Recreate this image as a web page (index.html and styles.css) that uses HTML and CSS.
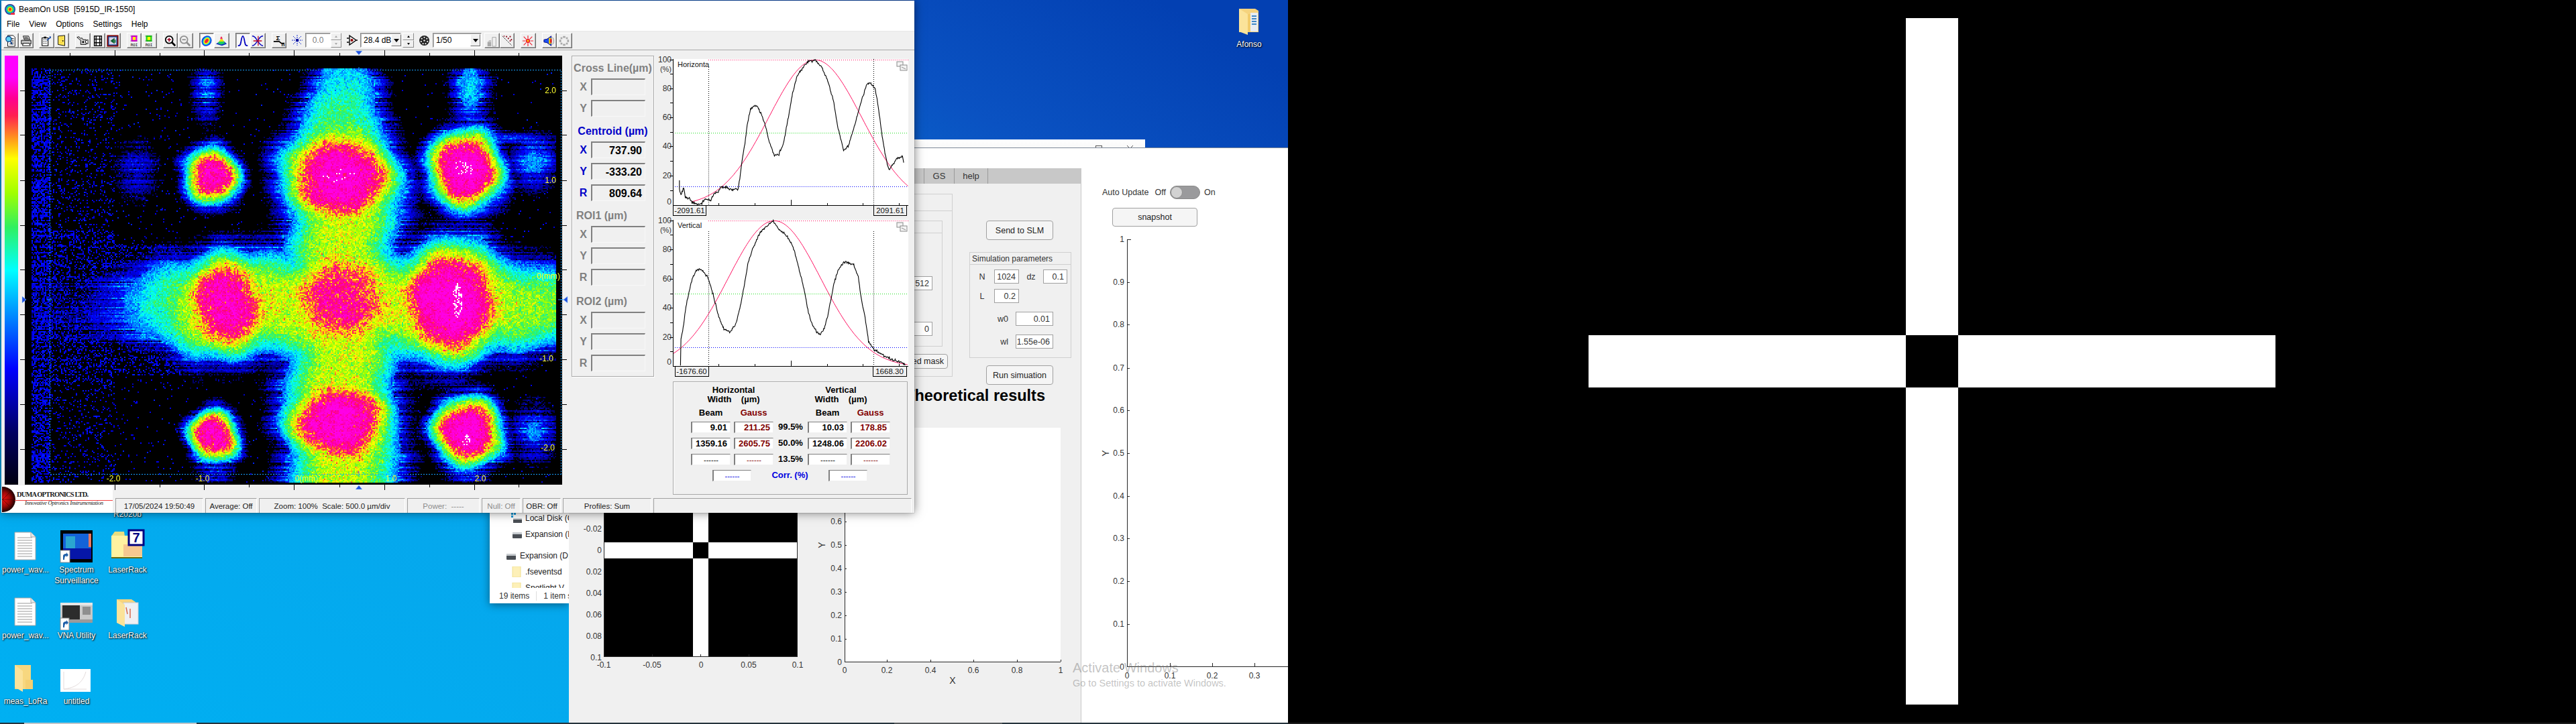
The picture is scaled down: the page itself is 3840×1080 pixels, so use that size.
FILE: index.html
```html
<!DOCTYPE html>
<html lang="en">
<head>
<meta charset="utf-8">
<title>BeamOn USB desktop</title>
<link rel="stylesheet" href="styles.css">
</head>
<body>
<div class="screen">
  <section class="monitor-left">
    <div class="desktop">

      <div class="desk-grid">
        <span></span><span></span>
        <div class="desk-cell"><span class="desk-label">R2020b</span></div>
        <div class="desk-cell">
          <svg class="desk-svg" viewBox="0 0 76 54"><path class="doc" d="M22 6h24l7 7v34H22z"/><path class="doc-fold" d="M46 6v7h7"/><path class="doc-lines" d="M26 14h22M26 18h22M26 22h22M26 26h22M26 30h22M26 34h22M26 38h22M26 42h22"/></svg>
          <span class="desk-label">power_wav...</span>
        </div>
        <div class="desk-cell">
          <svg class="desk-svg" viewBox="0 0 76 54"><rect x="14" y="3" width="48" height="48" fill="#000"/><rect x="18" y="8" width="42" height="28" fill="#1463d8"/><rect x="22" y="12" width="14" height="18" fill="#2aa6d0"/><rect x="56" y="8" width="4" height="20" fill="#e87860"/><rect x="18" y="30" width="42" height="16" fill="#0616a8"/><rect x="14" y="33" width="14" height="18" fill="#fff" stroke="#8a8a8a"/><path d="M18 47v-5c0-3 2-4 5-4v-2l3 4-3 3v-2c-2 0-3 2-3 6z" fill="#1f5fa8"/></svg>
          <span class="desk-label">Spectrum<br>Surveillance</span>
        </div>
        <div class="desk-cell">
          <svg class="desk-svg" viewBox="0 0 76 54"><path d="M14 12l5-7h14l1 7z" fill="#e8de80"/><rect x="14" y="11" width="46" height="32" fill="#fff2a0"/><rect x="32" y="24" width="28" height="18" fill="#f6c890"/><rect x="14" y="43" width="46" height="2" fill="#6b6b10"/><rect x="40" y="3" width="22" height="22" fill="#fff" stroke="#000080" stroke-width="3"/><text x="51" y="21" class="laser-seven">7</text></svg>
          <span class="desk-label">LaserRack</span>
        </div>
        <div class="desk-cell">
          <svg class="desk-svg" viewBox="0 0 76 54"><path class="doc" d="M22 6h24l7 7v34H22z"/><path class="doc-fold" d="M46 6v7h7"/><path class="doc-lines" d="M26 14h22M26 18h22M26 22h22M26 26h22M26 30h22M26 34h22M26 38h22M26 42h22"/></svg>
          <span class="desk-label">power_wav...</span>
        </div>
        <div class="desk-cell">
          <svg class="desk-svg" viewBox="0 0 76 54"><rect x="14" y="13" width="48" height="30" fill="#c9c9c9"/><rect x="14" y="13" width="48" height="4" fill="#e6e6e6"/><rect x="17" y="17" width="26" height="21" fill="#2c2c2c"/><rect x="47" y="19" width="12" height="12" fill="#8f8f8f"/><rect x="14" y="38" width="48" height="5" fill="#9a9a9a"/><rect x="14" y="36" width="13" height="18" fill="#fff" stroke="#8a8a8a"/><path d="M18 50v-5c0-3 2-4 5-4v-2l3 4-3 3v-2c-2 0-3 2-3 6z" fill="#1f5fa8"/></svg>
          <span class="desk-label">VNA Utility</span>
        </div>
        <div class="desk-cell">
          <svg class="desk-svg" viewBox="0 0 76 54"><path d="M22 8h22l6 4v28H22z" fill="#f5d37e"/><rect x="32" y="13" width="22" height="32" fill="#eef0f4" stroke="#c8ccd4"/><path d="M22 8l12 8v33l-12-6z" fill="#fbe39a"/><path d="M36 20l2 10M42 22v14" stroke="#d86a4c" stroke-width="1.5"/></svg>
          <span class="desk-label">LaserRack</span>
        </div>
        <div class="desk-cell">
          <svg class="desk-svg" viewBox="0 0 76 54"><path d="M22 8h24v36H22z" fill="#f7d77f"/><path d="M22 8l12 9v31l-12-7z" fill="#fbe29a"/><rect x="38" y="30" width="11" height="14" fill="#f4cf72"/></svg>
          <span class="desk-label">meas_LoRa</span>
        </div>
        <div class="desk-cell">
          <svg class="desk-svg" viewBox="0 0 76 54"><rect x="14" y="14" width="45" height="34" fill="#fff"/><path d="M19 44c16-2 28-8 33-26M19 18v26h34" fill="none" stroke="#e4dcdc" stroke-width="1"/></svg>
          <span class="desk-label">untitled</span>
        </div>
      </div>

      <figure class="desk-afonso">
        <svg class="afonso-svg" viewBox="0 0 34 44"><path d="M2 3h24l5 3v32H2z" fill="#f5d37e"/><rect x="19" y="9" width="11" height="28" fill="#e8ecf2"/><path d="M21 14h7M21 18h7M21 22h7M21 26h7" stroke="#3f88c5" stroke-width="2"/><path d="M2 3l13 8v31L2 37z" fill="#fbe39a"/><path d="M15 11h4v27h-4z" fill="#f2cc6c"/></svg>
        <figcaption class="desk-label">Afonso</figcaption>
      </figure>

      <div class="win-explorer">
        <div class="ex-tree">
          <div class="ex-row ex-sub"><svg class="ex-icon" viewBox="0 0 16 16"><rect x="0" y="0" width="3" height="3" fill="#1a9ad8"/><rect x="4" y="0" width="3" height="3" fill="#1a9ad8"/><rect x="0" y="4" width="3" height="3" fill="#1a9ad8"/><rect x="3" y="8" width="13" height="7" fill="#4a4f55"/><rect x="3" y="8" width="13" height="2" fill="#c8ccd0"/></svg>Local Disk (C:)</div>
          <div class="ex-row ex-sub"><svg class="ex-icon" viewBox="0 0 16 16"><rect x="2" y="5" width="14" height="9" rx="1" fill="#4a4f55"/><rect x="2" y="5" width="14" height="3" fill="#c8ccd0"/></svg>Expansion (D:)</div>
          <div class="ex-row ex-root"><svg class="ex-icon" viewBox="0 0 16 16"><rect x="1" y="5" width="14" height="9" rx="1" fill="#4a4f55"/><rect x="1" y="5" width="14" height="3" fill="#c8ccd0"/></svg>Expansion (D:)</div>
          <div class="ex-row ex-folder"><svg class="ex-icon-folder" viewBox="0 0 14 16"><path d="M1 0h12v16H1z" fill="#fdf0b8" stroke="#f0e090"/></svg>.fseventsd</div>
          <div class="ex-row ex-folder"><svg class="ex-icon-folder" viewBox="0 0 14 16"><path d="M1 0h12v16H1z" fill="#fdf0b8" stroke="#f0e090"/></svg>Spotlight V</div>
        </div>
        <div class="ex-status"><span>19 items</span><span class="ex-status-sep">1 item s</span></div>
      </div>

      <div class="win-behind">
        <svg class="behind-btns" viewBox="1620 208 87 12"><rect x="1633.5" y="217.5" width="9" height="9" class="behind-glyph"/><path d="M1680 217l9 9M1689 217l-9 9" class="behind-glyph"/></svg>
      </div>

      <div class="win-matlab">
        <div class="mat-panel">
          <div class="mat-tabs">
            <span class="mat-tab-spacer"></span>
            <span class="mat-tab mat-tab-gs">GS</span>
            <span class="mat-tab mat-tab-help">help</span>
          </div>
          <div class="mat-columns">
            <div class="mask-group">
              <div class="mask-group-title"></div>
              <div class="mask-inner">
                <div class="mask-inner-title"></div>
                <div class="mask-inner-body">
                  <span class="num-field num-wide">512</span>
                  <span class="num-field num-wide">0</span>
                </div>
              </div>
              <button class="mat-btn btn-mask">Load saved mask</button>
            </div>
            <div class="sim-col">
              <button class="mat-btn btn-sim">Send to SLM</button>
              <div class="sim-box">
                <div class="sim-title">Simulation parameters</div>
                <div class="sim-row sim-row-n"><span class="sim-lab">N</span><span class="num-field sim-f1">1024</span><span class="sim-lab">dz</span><span class="num-field sim-f2">0.1</span></div>
                <div class="sim-row sim-row-l"><span class="sim-lab">L</span><span class="num-field sim-f1">0.2</span></div>
                <div class="sim-row sim-row-w0"><span class="sim-lab-r">w0</span><span class="num-field sim-f3">0.01</span></div>
                <div class="sim-row sim-row-wl"><span class="sim-lab-r">wl</span><span class="num-field sim-f3">1.55e-06</span></div>
              </div>
              <button class="mat-btn btn-run">Run simuation</button>
            </div>
          </div>
          <h2 class="theory">Theoretical results</h2>
          <svg class="panel-plots" viewBox="848 605 763 473">
            <g class="mask-img">
              <rect x="900" y="662" width="288" height="318" fill="#000"/>
              <rect x="1033" y="662" width="23" height="318" fill="#fff"/>
              <rect x="900" y="810" width="288" height="24" fill="#fff"/>
              <rect x="1033" y="810" width="23" height="24" fill="#000"/>
            </g>
            <path class="axis" d="M900 662v318h288v-318M972 980v-3M1044 980v-3M1116 980v-3"/>
            <g class="tick tick-end">
              <text x="897" y="794">-0.02</text><text x="897" y="826">0</text><text x="897" y="858">0.02</text><text x="897" y="890">0.04</text><text x="897" y="922">0.06</text><text x="897" y="954">0.08</text><text x="897" y="986">0.1</text>
            </g>
            <g class="tick tick-mid">
              <text x="900" y="997">-0.1</text><text x="972" y="997">-0.05</text><text x="1045" y="997">0</text><text x="1116" y="997">0.05</text><text x="1189" y="997">0.1</text>
            </g>
            <rect x="1259" y="639" width="322" height="349" fill="#fff"/>
            <path class="axis" d="M1259 639v349h322M1259 779h3M1259 814h3M1259 849h3M1259 884h3M1259 919h3M1259 954h3M1322 988v-3M1387 988v-3M1451 988v-3M1516 988v-3M1581 988v-3"/>
            <g class="tick tick-end">
              <text x="1255" y="783">0.6</text><text x="1255" y="818">0.5</text><text x="1255" y="853">0.4</text><text x="1255" y="888">0.3</text><text x="1255" y="923">0.2</text><text x="1255" y="958">0.1</text><text x="1255" y="993">0</text>
            </g>
            <g class="tick tick-mid">
              <text x="1259" y="1005">0</text><text x="1322" y="1005">0.2</text><text x="1387" y="1005">0.4</text><text x="1451" y="1005">0.6</text><text x="1516" y="1005">0.8</text><text x="1581" y="1005">1</text>
            </g>
            <text class="tick-title" x="1420" y="1021">X</text>
            <text class="tick-title" transform="translate(1230 814) rotate(-90)">Y</text>
          </svg>
        </div>
        <div class="mat-right">
          <div class="auto-row">
            <span class="auto-lab">Auto Update</span><span class="auto-off">Off</span>
            <span class="toggle"><span class="toggle-knob"></span></span>
            <span class="auto-on">On</span>
          </div>
          <button class="mat-btn btn-snap">snapshot</button>
          <svg class="right-plot" viewBox="1612 345 308 733">
            <path class="axis" d="M1686 357h-6v637h240M1680 421h4M1680 484h4M1680 549h4M1680 612h4M1680 676h4M1680 740h4M1680 803h4M1680 867h4M1680 931h4M1744 994v-5M1807 994v-5M1870 994v-5"/>
            <g class="tick tick-end">
              <text x="1676" y="361">1</text><text x="1676" y="425">0.9</text><text x="1676" y="488">0.8</text><text x="1676" y="553">0.7</text><text x="1676" y="616">0.6</text><text x="1676" y="680">0.5</text><text x="1676" y="744">0.4</text><text x="1676" y="807">0.3</text><text x="1676" y="871">0.2</text><text x="1676" y="935">0.1</text><text x="1676" y="999">0</text>
            </g>
            <g class="tick tick-mid">
              <text x="1680" y="1012">0</text><text x="1744" y="1012">0.1</text><text x="1807" y="1012">0.2</text><text x="1870" y="1012">0.3</text>
            </g>
            <text class="tick-title" transform="translate(1653 676) rotate(-90)">Y</text>
          </svg>
        </div>
      </div>

      <div class="win-beamon">
        <header class="bo-title">
          <svg class="bo-title-icon" viewBox="0 0 16 16"><circle cx="8" cy="8" r="8" fill="#3a3a8c"/><circle cx="8" cy="8" r="6.5" fill="#00b4e0"/><circle cx="8" cy="8" r="5" fill="#30d060"/><circle cx="8" cy="8" r="3.6" fill="#f0f000"/><circle cx="8" cy="8" r="2.2" fill="#ff3020"/><path d="M9 13h6v3H9z" fill="#e83048"/></svg>
          <span>BeamOn USB&nbsp; [5915D_IR-1550]</span>
        </header>
        <nav class="bo-menu"><span>File</span><span>View</span><span>Options</span><span>Settings</span><span>Help</span></nav>
        <div class="bo-toolbar">
          <div class="tb-group tb-group-8">
            <span class="tb-btn"><svg viewBox="0 0 20 20"><path d="M5 1h9l3 3v15H5z" fill="#fff" stroke="#000"/><path d="M9 6h6M11 9h4M11 12h4M8 15h7" stroke="#000"/><circle cx="6.5" cy="7" r="4.5" fill="#5ad0f0" stroke="#0a3c88" stroke-width="1.4"/><path d="M9.5 11l3 5" stroke="#0a3c88" stroke-width="2"/></svg></span>
            <span class="tb-btn"><svg viewBox="0 0 20 20"><path d="M5 2h9l2 6H7z" fill="#fff" stroke="#000"/><path d="M2 9h16v6H2z" fill="#c0c0c0" stroke="#000"/><path d="M5 14h10l2 4H4z" fill="#fff" stroke="#000"/><path d="M7 4h6M7 6h7" stroke="#000"/></svg></span>
          </div>
          <div class="tb-group">
            <span class="tb-btn"><svg viewBox="0 0 20 20"><path d="M3 5h10v13H3z" fill="#fff" stroke="#000" stroke-width="1.2"/><path d="M5 8h6M5 11h6M5 14h6" stroke="#000" stroke-dasharray="1.5 1"/><path d="M6 3h4v3H6z" fill="#000"/><path d="M11 9l6-5" stroke="#1c4ea8" stroke-width="2"/><path d="M15 2l3 1-1 3z" fill="#1c4ea8"/></svg></span>
            <span class="tb-btn"><svg viewBox="0 0 20 20"><path d="M4 2l11-1v17L4 16z" fill="#ffe65c" stroke="#000"/><path d="M7 4l6-1M7 7l6-1M7 10l6-1M7 13l6 0" stroke="#e0b000" stroke-dasharray="1 1"/><circle cx="12" cy="10" r="1" fill="#000"/></svg></span>
          </div>
          <div class="tb-group">
            <span class="tb-btn"><svg viewBox="0 0 20 20"><path d="M1 4l3-1 3 3 2-1 2 3h5v8H7V9L4 7z" fill="#ccc" stroke="#000"/><path d="M15 10l4-2v7l-4-2z" fill="#fff" stroke="#000"/><circle cx="11" cy="12" r="1.6" fill="#000"/></svg></span>
            <span class="tb-btn"><svg viewBox="0 0 20 20"><rect x="4" y="2" width="12" height="16" fill="#fff" stroke="#000" stroke-width="1.5"/><path d="M4 7h12M4 13h12M7 2v16M13 2v16" stroke="#000" stroke-width="1.5"/></svg></span>
            <span class="tb-btn"><svg viewBox="0 0 20 20"><rect x="1.5" y="1.5" width="17" height="17" fill="#1a50a0" stroke="#800000" stroke-width="2"/><rect x="4" y="4" width="12" height="12" fill="#d8d0e8"/><path d="M6 10l7-5v10z" fill="#106030"/><path d="M11 8h4v5h-4z" fill="#2a8050"/></svg></span>
          </div>
          <div class="tb-group">
            <span class="tb-btn"><svg viewBox="0 0 20 20"><rect x="5" y="1" width="10" height="10" fill="#e000e0"/><rect x="7.5" y="3.5" width="5" height="5" fill="#ff0"/><path d="M4 2h12M4 10h12" stroke="#600060" stroke-dasharray="1 1"/><text x="10" y="18.5" class="roi-text">ROI</text></svg></span>
            <span class="tb-btn"><svg viewBox="0 0 20 20"><rect x="5" y="1" width="10" height="10" fill="#20d020"/><rect x="7.5" y="3.5" width="5" height="5" fill="#ff0"/><path d="M4 2h12M4 10h12" stroke="#006000" stroke-dasharray="1 1"/><text x="10" y="18.5" class="roi-text">ROI</text></svg></span>
          </div>
          <div class="tb-group">
            <span class="tb-btn"><svg viewBox="0 0 20 20"><circle cx="8" cy="8" r="6" fill="#fff" stroke="#000" stroke-width="2"/><path d="M5 8h6M8 5v6" stroke="#a01030" stroke-width="2"/><path d="M12 12l6 6" stroke="#000" stroke-width="3"/></svg></span>
            <span class="tb-btn"><svg viewBox="0 0 20 20"><circle cx="8" cy="8" r="6" fill="#f0f0f0" stroke="#909090" stroke-width="2"/><path d="M5 8h6" stroke="#909090" stroke-width="2"/><path d="M12 12l6 6" stroke="#909090" stroke-width="3"/></svg></span>
          </div>
          <div class="tb-group">
            <span class="tb-btn tb-on"><svg viewBox="0 0 20 20"><ellipse cx="10" cy="10" rx="8" ry="9" transform="rotate(35 10 10)" fill="#1040e0"/><ellipse cx="10" cy="10" rx="6" ry="7.5" transform="rotate(35 10 10)" fill="#10d0e0"/><ellipse cx="10" cy="10" rx="4.5" ry="6" transform="rotate(35 10 10)" fill="#f0f000"/><ellipse cx="10" cy="10" rx="2.6" ry="4" transform="rotate(35 10 10)" fill="#f02040"/></svg></span>
            <span class="tb-btn"><svg viewBox="0 0 20 20"><path d="M1 15l6-4h8l4 4-8 3z" fill="#1030c0"/><path d="M4 14l4-5h5l3 5-6 2z" fill="#20d060"/><path d="M6 11l3-4h3l2 4z" fill="#f0e000"/><path d="M8 7h4l-1-4H9z" fill="#f03060"/></svg></span>
          </div>
          <div class="tb-group">
            <span class="tb-btn tb-on"><svg viewBox="0 0 20 20"><path d="M2 18c4 0 4-2 5-7 1-6 2-9 3-9s2 3 3 9c1 5 1 7 5 7" fill="none" stroke="#0000c0" stroke-width="2"/></svg></span>
            <span class="tb-btn"><svg viewBox="0 0 20 20"><path d="M1 2c5 0 6 4 9 8 3-4 4-8 9-8M1 18c4 0 6-4 9-8 3 4 5 8 9 8" fill="none" stroke="#0000c0" stroke-width="1.6"/><path d="M3 10h14M11 2v16" stroke="#c00020" stroke-width="1.4"/></svg></span>
          </div>
          <div class="tb-group tb-group-8">
            <span class="tb-btn"><svg viewBox="0 0 20 20"><text x="5" y="9" class="sig-text">Σ</text><path d="M1 11h9l4 3h5" stroke="#000" stroke-width="2" fill="none"/><text x="14" y="19" class="sig-n">n</text></svg></span>
          </div>
          <svg class="tb-icon tb-star" viewBox="0 0 16 18"><path d="M8 1v16M0 9h16M2 3l12 12M14 3L2 15" stroke="#1830d0" stroke-dasharray="2 1"/><circle cx="8" cy="9" r="2" fill="#000090"/></svg>
          <div class="tb-field">0.0</div>
          <div class="tb-spin tb-spin-dis"><span class="spin-up"></span><span class="spin-down"></span></div>
          <svg class="tb-icon tb-amp" viewBox="0 0 16 18"><path d="M0 6h3M0 12h3M13 9h3M4 2v14l10-7z" fill="none" stroke="#000" stroke-width="1.4"/><circle cx="7.5" cy="9" r="2" fill="#900000"/></svg>
          <div class="tb-combo tb-combo-db"><span class="combo-text">28.4 dB</span><span class="combo-arrow"></span></div>
          <div class="tb-spin tb-spin-on"><span class="spin-up"></span><span class="spin-down"></span></div>
          <svg class="tb-icon tb-wheel" viewBox="0 0 16 16"><circle cx="8" cy="8" r="8" fill="#222"/><g fill="#e8e8e8"><circle cx="8" cy="3" r="1.2"/><circle cx="12" cy="5" r="1.2"/><circle cx="13" cy="9.5" r="1.2"/><circle cx="10" cy="13" r="1.2"/><circle cx="6" cy="13" r="1.2"/><circle cx="3" cy="9.5" r="1.2"/><circle cx="4" cy="5" r="1.2"/><circle cx="8" cy="8" r="1.4"/></g></svg>
          <div class="tb-combo tb-combo-nd"><span class="combo-text">1/50</span><span class="combo-arrow"></span></div>
          <div class="tb-group tb-group-4">
            <span class="tb-btn"><svg viewBox="0 0 20 20"><path d="M3 12h6v7H3z" fill="#a8a8a8"/><path d="M11 4h6v15h-6z" fill="#f0f0f0" stroke="#a0a0a0"/><path d="M3 12l3-3h3v3z" fill="#c0c0c0"/></svg></span>
            <span class="tb-btn"><svg viewBox="0 0 20 20"><path d="M2 2l16 16" stroke="#000" stroke-dasharray="1.5 1"/><g fill="#901020"><circle cx="9" cy="3" r="1.2"/><circle cx="15" cy="3" r="1.2"/><circle cx="12" cy="6" r="1.2"/><circle cx="17" cy="8" r="1.2"/><circle cx="15" cy="10" r="1.2"/><circle cx="5" cy="2" r="1"/></g></svg></span>
          </div>
          <div class="tb-group">
            <span class="tb-btn"><svg viewBox="0 0 20 20"><path d="M10 1v5M10 14v5M1 10h5M14 10h5M3 3l4 4M17 3l-4 4M3 17l4-4M17 17l-4-4" stroke="#f02030" stroke-width="1.3"/><circle cx="10" cy="10" r="3.5" fill="#f02030"/><circle cx="10" cy="10" r="1.6" fill="#ffd000"/></svg></span>
          </div>
          <div class="tb-group">
            <span class="tb-btn"><svg viewBox="0 0 20 20"><path d="M1 8l5-1 7-5v16l-7-5-5-1z" fill="#1c50f0" stroke="#000080"/><path d="M9 5h4v10H9z" fill="#f0d000"/><path d="M11 7h3v6h-3z" fill="#e02020"/><path d="M15 4c3 3 3 9 0 12" fill="none" stroke="#808080"/></svg></span>
            <span class="tb-btn"><svg viewBox="0 0 20 20"><g fill="#a8a8a8"><rect x="8" y="2" width="4" height="3"/><rect x="8" y="15" width="4" height="3"/><rect x="2" y="8" width="3" height="4"/><rect x="15" y="8" width="3" height="4"/><rect x="4" y="4" width="3" height="3"/><rect x="13" y="4" width="3" height="3"/><rect x="4" y="13" width="3" height="3"/><rect x="13" y="13" width="3" height="3"/></g></svg></span>
          </div>
        </div>

        <div class="bo-body">
          <div class="scope">
            <div class="colorbar"></div>
            <canvas id="heat" class="heat" width="801" height="640"></canvas>
            <svg class="scope-overlay" viewBox="2 75 850 667">
              <path class="tick-line" d="M171 75v8M304 75v8M438 75v8M573 75v8M707 75v8M104 79v4M238 79v4M371 79v4M506 79v4M640 79v4M773 79v4"/>
              <path class="tick-line" d="M171 723v8M304 723v8M438 723v8M573 723v8M707 723v8M238 723v4M371 723v4M506 723v4M640 723v4M773 723v4"/>
              <path class="tick-line" d="M30 135h7M30 201h7M30 269h7M30 336h7M30 402h7M30 469h7M30 536h7M30 603h7M30 670h7M838 135h7M838 201h7M838 269h7M838 336h7M838 402h7M838 469h7M838 536h7M838 603h7M838 670h7"/>
              <rect class="dash-box" x="74" y="104" width="762" height="603"/>
              <path class="dash-mark" d="M70 447h8M832 447h8M535 100v8M535 703v8"/>
              <path class="marker" d="M530 76h10l-5 6zM530 730h10l-5-6zM33 442v10l6-5zM846 442v10l-6-5z"/>
              <g class="scope-label">
                <text x="829" y="139">2.0</text><text x="829" y="273">1.0</text><text x="835" y="416">0(mm)</text><text x="825" y="539">-1.0</text><text x="827" y="672">-2.0</text>
              </g>
              <g class="scope-label scope-label-mid">
                <text x="169" y="718">-2.0</text><text x="302" y="718">-1.0</text><text x="457" y="718">0(mm)</text><text x="583" y="718">1.0</text><text x="716" y="718">2.0</text>
              </g>
            </svg>
          </div>

          <aside class="readouts">
            <div class="rd-section">
              <h3 class="rd-head rd-gray">Cross Line(µm)</h3>
              <div class="rd-row rd-gray"><span class="rd-key">X</span><span class="rd-val"></span></div>
              <div class="rd-row rd-gray"><span class="rd-key">Y</span><span class="rd-val"></span></div>
            </div>
            <div class="rd-section">
              <h3 class="rd-head rd-blue">Centroid (µm)</h3>
              <div class="rd-row rd-blue"><span class="rd-key">X</span><span class="rd-val">737.90</span></div>
              <div class="rd-row rd-blue"><span class="rd-key">Y</span><span class="rd-val">-333.20</span></div>
              <div class="rd-row rd-blue"><span class="rd-key">R</span><span class="rd-val">809.64</span></div>
            </div>
            <div class="rd-section">
              <h3 class="rd-head rd-gray rd-indent">ROI1 (µm)</h3>
              <div class="rd-row rd-gray"><span class="rd-key">X</span><span class="rd-val"></span></div>
              <div class="rd-row rd-gray"><span class="rd-key">Y</span><span class="rd-val"></span></div>
              <div class="rd-row rd-gray"><span class="rd-key">R</span><span class="rd-val"></span></div>
            </div>
            <div class="rd-section rd-last">
              <h3 class="rd-head rd-gray rd-indent">ROI2 (µm)</h3>
              <div class="rd-row rd-gray"><span class="rd-key">X</span><span class="rd-val"></span></div>
              <div class="rd-row rd-gray"><span class="rd-key">Y</span><span class="rd-val"></span></div>
              <div class="rd-row rd-gray"><span class="rd-key">R</span><span class="rd-val"></span></div>
            </div>
          </aside>

          <div class="profiles">
            <svg class="prof-svg" viewBox="975 83 385 484">
              <rect x="1003" y="88" width="351" height="218" fill="#fff"/>
              <rect x="1003" y="328" width="351" height="218" fill="#fff"/>
              <path class="dot-red" d="M1056 89.5h298M1056 329.5h298"/>
              <path class="dot-green" d="M1003 198.5h351M1003 438.5h351"/>
              <path class="dot-blue" d="M1003 278.5h351M1003 518.5h351"/>
              <path class="dot-black" d="M1056 100v206M1302 88v218M1056 345v201M1302 345v201"/>
              <g id="curves"></g>
              <path class="axis-strong" d="M1003 88v218h351M998 89h5M999 110h4M998 132h5M999 153h4M998 175h5M999 197h4M998 218h5M999 240h4M998 262h5M999 284h4M1071 306v-3M1125 306v-3M1179 306v-8M1233 306v-3M1286 306v-3M1340 306v-3"/>
              <path class="axis-strong" d="M1003 328v218h351M998 329h5M999 350h4M998 372h5M999 394h4M998 416h5M999 438h4M998 459h5M999 481h4M998 503h5M999 524h4M1071 546v-3M1125 546v-3M1179 546v-8M1233 546v-3M1286 546v-3M1340 546v-3"/>
              <g class="prof-tick">
                <text x="1001" y="93">100</text><text x="1001" y="107" class="prof-unit">(%)</text><text x="1001" y="136">80</text><text x="1001" y="179">60</text><text x="1001" y="222">40</text><text x="1001" y="266">20</text><text x="1001" y="305">0</text>
                <text x="1001" y="333">100</text><text x="1001" y="347" class="prof-unit">(%)</text><text x="1001" y="376">80</text><text x="1001" y="420">60</text><text x="1001" y="463">40</text><text x="1001" y="507">20</text><text x="1001" y="544">0</text>
              </g>
              <text class="prof-name" x="1010" y="100">Horizonta</text>
              <text class="prof-name" x="1010" y="340">Vertical</text>
              <g class="mini-win"><rect x="1337" y="92" width="9" height="7"/><rect x="1342" y="97" width="10" height="8"/><path d="M1344 100l6 3"/><rect x="1337" y="332" width="9" height="7"/><rect x="1342" y="337" width="10" height="8"/><path d="M1344 340l6 3"/></g>
              <g class="edge-tag">
                <rect x="1003.5" y="306.5" width="49" height="15"/><text x="1028" y="318">-2091.61</text>
                <rect x="1302.5" y="306.5" width="49" height="15"/><text x="1327" y="318">2091.61</text>
                <rect x="1006.5" y="546.5" width="50" height="15"/><text x="1031" y="558">-1676.60</text>
                <rect x="1301.5" y="546.5" width="50" height="15"/><text x="1326" y="558">1668.30</text>
              </g>
            </svg>
            <div class="width-table">
              <div class="wt-head">Horizontal<br><span class="wt-pre">Width    (µm)</span></div>
              <span></span>
              <div class="wt-head wt-head-v">Vertical<br><span class="wt-pre">Width    (µm)</span></div>

              <div class="wt-col">Beam</div><div class="wt-col wt-gauss">Gauss</div><span></span><div class="wt-col">Beam</div><div class="wt-col wt-gauss">Gauss</div>

              <span class="wt-val">9.01</span><span class="wt-val wt-gauss">211.25</span><span class="wt-pct">99.5%</span><span class="wt-val">10.03</span><span class="wt-val wt-gauss">178.85</span>
              <span class="wt-val">1359.16</span><span class="wt-val wt-gauss">2605.75</span><span class="wt-pct">50.0%</span><span class="wt-val">1248.06</span><span class="wt-val wt-gauss">2206.02</span>
              <span class="wt-val wt-dash">------</span><span class="wt-val wt-dash wt-gauss">------</span><span class="wt-pct">13.5%</span><span class="wt-val wt-dash">------</span><span class="wt-val wt-dash wt-gauss">------</span>

              <div class="wt-corr"><span class="wt-val wt-dash wt-corr-val">------</span><span class="wt-corr-lab">Corr. (%)</span><span class="wt-val wt-dash wt-corr-val">------</span></div>
            </div>
          </div>
        </div>

        <footer class="bo-status">
          <span class="st st-time">17/05/2024 19:50:49</span>
          <span class="st st-avg">Average: Off</span>
          <span class="st st-zoom">Zoom: 100%&nbsp; Scale: 500.0 µm/div</span>
          <span class="st st-pow st-dim">Power:&nbsp; -----</span>
          <span class="st st-null st-dim">Null: Off</span>
          <span class="st st-obr">OBR: Off</span>
          <span class="st st-prof">Profiles: Sum</span>
          <span class="st st-rest"></span>
        </footer>

        <svg class="bo-logo" viewBox="3 723 165 41">
          <defs><radialGradient id="sun"><stop offset="0" stop-color="#ff1010"/><stop offset=".55" stop-color="#a00808"/><stop offset="1" stop-color="#1a0000"/></radialGradient></defs>
          <rect x="3" y="723" width="165" height="41" fill="#fff"/>
          <circle cx="4" cy="744" r="19" fill="url(#sun)"/>
          <path d="M4 725v38M-15 744h38M-9 731l26 26M17 731l-26 26" stroke="#400000" stroke-width=".6"/>
          <path d="M22 745.5h146" stroke="#f04040"/>
          <text class="logo-main" x="25" y="740" textLength="107">DUMA OPTRONICS LTD.</text>
          <text class="logo-sub" x="37" y="752" textLength="117">Innovative Optronics Instrumentation</text>
        </svg>
      </div>

      <div class="watermark">
        <div class="wm-big">Activate Windows</div>
        <div class="wm-small">Go to Settings to activate Windows.</div>
      </div>
    </div>
    <div class="taskbar"><span class="tk-a"></span><span class="tk-b"></span><span class="tk-c"></span><span class="tk-d"></span></div>
  </section>

  <section class="monitor-right">
    <div class="right-stage">
      <div class="cross">
        <span></span><span class="cross-w"></span><span></span>
        <span class="cross-w"></span><span></span><span class="cross-w"></span>
        <span></span><span class="cross-w"></span><span></span>
      </div>
    </div>
    <div class="taskbar-r"></div>
  </section>
</div>
<script src="script.js"></script>
</body>
</html>
```

FILE: styles.css
```css
* { box-sizing: border-box; }
html, body { margin: 0; padding: 0; background: #000; overflow: hidden; }
body { font-family: "Liberation Sans", Arial, sans-serif; font-size: 12px; color: #000; }
h2, h3, figure { margin: 0; }
text { font-family: "Liberation Sans", Arial, sans-serif; }

.screen { display: flex; width: 3840px; height: 1080px; }
.monitor-left { width: 1920px; height: 1080px; display: flex; flex-direction: column; }
.monitor-right { width: 1920px; height: 1080px; display: flex; flex-direction: column; background: #000; }

/* desktop */
.desktop {
  position: relative; flex: 1; overflow: hidden;
  background: linear-gradient(to top right, #00b0f2 0%, #06a6ec 36%, #0a52c2 80%, #0340b2 95%);
}
.taskbar { height: 2px; display: flex; background: #26343d; }
.tk-a { width: 36px; }
.tk-b { width: 257px; background: #c0c6ca; }
.tk-c { width: 1040px; }
.tk-d { width: 161px; background: #55585a; }
.taskbar-r { height: 2px; background: #1c1c1c; }

.desk-grid {
  position: absolute; left: 0; top: 759px;
  display: grid; grid-template-columns: repeat(3, 76px); grid-template-rows: 29px 98px 98px 98px;
}
.desk-cell { display: flex; flex-direction: column; align-items: center; }
.desk-svg { width: 76px; height: 54px; display: block; }
.desk-label {
  color: #fff; font-size: 12px; line-height: 16px; text-align: center; white-space: nowrap;
  text-shadow: 1px 1px 2px #000, 0 0 2px rgba(0,0,0,.7);
}
.doc { fill: #fff; stroke: #a8a8a8; }
.doc-fold { fill: #e8e8e8; stroke: #a8a8a8; }
.doc-lines { stroke: #9a9a9a; fill: none; }
.laser-seven { font-size: 20px; font-weight: bold; fill: #000080; text-anchor: middle; }

.desk-afonso { position: absolute; left: 1830px; top: 10px; width: 64px; display: flex; flex-direction: column; align-items: center; }
.afonso-svg { width: 34px; height: 44px; display: block; margin-bottom: 4px; }

/* explorer */
.win-explorer {
  position: absolute; left: 730px; top: 760px; width: 118px; height: 140px; background: #fff; overflow: hidden;
  box-shadow: 0 2px 12px rgba(0,0,0,.45);
}
.ex-tree { height: 117px; padding-top: 1px; overflow: hidden; color: #1a1a1a; }
.ex-row { height: 24px; display: flex; align-items: center; white-space: nowrap; }
.ex-sub { padding-left: 32px; }
.ex-root { padding-left: 24px; margin-top: 8px; }
.ex-folder { padding-left: 33px; }
.ex-icon { width: 16px; height: 16px; margin-right: 5px; flex: none; }
.ex-icon-folder { width: 14px; height: 16px; margin-right: 6px; flex: none; }
.ex-status { height: 23px; display: flex; align-items: center; padding-left: 14px; color: #333; white-space: nowrap; }
.ex-status-sep { margin-left: 10px; padding-left: 10px; border-left: 1px solid #ddd; }

/* window behind */
.win-behind {
  position: absolute; left: 1300px; top: 208px; width: 407px; height: 20px;
  display: flex; justify-content: flex-end;
  background: linear-gradient(#fff, #f4f4f4);
}
.behind-btns { width: 87px; height: 12px; display: block; }
.behind-glyph { fill: none; stroke: #555; }

/* matlab */
.win-matlab {
  position: absolute; left: 848px; top: 220px; width: 1072px; height: 858px;
  display: flex; background: #fff; border-top: 1px solid #7f8a99;
}
.mat-panel {
  width: 764px; margin-top: 30px; background: #f0f0f0; border-right: 1px solid #c8c8c8;
  display: flex; flex-direction: column;
}
.mat-tabs { height: 23px; display: flex; background: #c8c8c8; color: #333; flex: none; }
.mat-tab-spacer { width: 529px; }
.mat-tab { display: flex; align-items: center; justify-content: center; border-left: 1px solid #9a9a9a; font-size: 13px; }
.mat-tab-gs { width: 45px; }
.mat-tab-help { width: 51px; border-right: 1px solid #9a9a9a; }

.mat-columns { display: flex; padding-top: 15px; flex: none; }
.mask-group {
  width: 550px; height: 273px; margin-left: 22px; border: 1px solid #d0d0d0;
  display: flex; flex-direction: column; align-items: flex-end;
}
.mask-group-title { align-self: stretch; height: 25px; border-bottom: 1px solid #d0d0d0; }
.mask-inner { width: 520px; height: 188px; margin: 14px 14px 0 0; border: 1px solid #d0d0d0; display: flex; flex-direction: column; }
.mask-inner-title { height: 18px; border-bottom: 1px solid #d0d0d0; }
.mask-inner-body { display: flex; flex-direction: column; align-items: flex-end; padding: 64px 14px 0 0; gap: 47px; }
.num-field {
  display: flex; align-items: center; justify-content: flex-end;
  height: 21px; padding-right: 4px; background: #fff; border: 1px solid #a0a0a0; color: #333; font-size: 12.5px;
}
.num-wide { width: 60px; }
.mat-btn {
  display: block; padding: 0; background: #f5f5f5; border: 1px solid #a0a0a0; border-radius: 4px;
  font: 12.5px "Liberation Sans", Arial, sans-serif; color: #222;
}
.btn-mask { width: 110px; height: 22px; margin: 11px 6px 0 0; }

.sim-col { width: 152px; margin-left: 25px; padding-top: 40px; display: flex; flex-direction: column; }
.btn-sim, .btn-run { width: 100px; height: 29px; margin-left: 25px; }
.sim-box { width: 152px; height: 158px; margin-top: 18px; border: 1px solid #cfcfcf; }
.sim-title { height: 18px; border-bottom: 1px solid #cfcfcf; padding: 2px 3px; color: #333; white-space: nowrap; }
.btn-run { margin-top: 11px; }
.sim-row { display: flex; align-items: center; }
.sim-row-n { margin-top: 7px; }
.sim-row-l { margin-top: 8px; }
.sim-row-w0 { margin-top: 13px; }
.sim-row-wl { margin-top: 13px; }
.sim-lab { width: 36px; text-align: center; color: #333; font-size: 12.5px; }
.sim-lab-r { width: 57px; text-align: right; margin-right: 11px; color: #333; font-size: 12.5px; }
.sim-f1 { width: 37px; }
.sim-f2 { width: 36px; }
.sim-f3 { width: 56px; }

.theory { font-size: 23.5px; line-height: 30px; font-weight: bold; text-align: right; padding: 1px 53px 0 0; height: 30px; flex: none; white-space: nowrap; }
.panel-plots { width: 763px; height: 473px; display: block; flex: none; }
.axis { fill: none; stroke: #262626; stroke-width: 1; shape-rendering: crispEdges; }
.tick text, .tick-title { font-size: 12px; fill: #333; }
.tick-end text { text-anchor: end; }
.tick-mid text { text-anchor: middle; }
.tick-title { font-size: 14px; text-anchor: middle; }

.mat-right { flex: 1; display: flex; flex-direction: column; padding-top: 56px; }
.auto-row { display: flex; align-items: center; height: 20px; padding-left: 31px; color: #333; font-size: 12.5px; white-space: nowrap; }
.auto-off { margin-left: 9px; }
.toggle { width: 45px; height: 20px; margin-left: 6px; border-radius: 10px; background: #9a9a9c; border: 1px solid #8a8a8a; display: flex; align-items: center; }
.toggle-knob { width: 18px; height: 18px; border-radius: 50%; background: #d2d2d2; border: 1px solid #8e8e8e; }
.auto-on { margin-left: 6px; }
.btn-snap { width: 127px; height: 28px; margin: 13px 0 0 46px; }
.right-plot { width: 308px; height: 733px; margin-top: 7px; display: block; flex: none; }

/* BeamOn */
.win-beamon {
  position: absolute; left: 2px; top: 1px; width: 1361px; height: 764px;
  display: flex; flex-direction: column; background: #f0f0f0;
  box-shadow: 0 0 14px rgba(0,0,0,.5), 0 0 1px rgba(0,0,0,.6);
}
.bo-title { height: 25px; flex: none; background: #fff; display: flex; align-items: center; padding-left: 5px; white-space: nowrap; }
.bo-title-icon { width: 16px; height: 16px; margin-right: 5px; }
.bo-menu { height: 20px; flex: none; background: #fff; display: flex; align-items: center; padding-left: 8px; white-space: nowrap; }
.bo-menu span { margin-right: 14px; }
.bo-toolbar {
  height: 29px; flex: none; display: flex; align-items: flex-start; padding: 2px 0 0 3px;
  border-top: 1px solid #e8e8e8; border-bottom: 1px solid #a8a8a8;
}
.tb-group { display: flex; margin-right: 9px; flex: none; }
.tb-group-8 { margin-right: 8px; }
.tb-group-4 { margin-left: 4px; }
.tb-btn {
  width: 22.5px; height: 23px; flex: none; display: flex; align-items: center; justify-content: center;
  border: 1px solid; border-color: #fff #6e6e6e #6e6e6e #fff; box-shadow: inset -1px -1px #a6a6a6;
  background: #f0f0f0;
}
.tb-btn svg { width: 18px; height: 18px; display: block; }
.tb-on { border-color: #6e6e6e #fff #fff #6e6e6e; box-shadow: inset 1px 1px #a6a6a6; background: #f8f8f8; }
.roi-text { font-size: 6.5px; font-family: "DejaVu Sans Mono", monospace; text-anchor: middle; fill: #000; }
.sig-text { font-size: 11px; font-weight: bold; fill: #000; }
.sig-n { font-size: 9px; font-weight: bold; fill: #000; }
.tb-icon { flex: none; display: block; margin-top: 2px; }
.tb-star { width: 16px; height: 18px; margin-right: 4px; }
.tb-amp { width: 16px; height: 18px; margin: 2px 4px 0 8px; }
.tb-wheel { width: 15px; height: 15px; margin: 4px 5px 0 8px; }
.tb-field {
  width: 38px; height: 22px; background: #fff; color: #808080; font-size: 12px;
  border: 1px solid; border-color: #8c8c8c #fff #fff #8c8c8c; box-shadow: inset 1px 1px #b4b4b4;
  display: flex; align-items: center; justify-content: center; flex: none;
}
.tb-spin { width: 16px; height: 22px; display: flex; flex-direction: column; flex: none; }
.tb-spin-on { width: 17px; margin-left: 2px; }
.spin-up, .spin-down {
  flex: 1; background: #f0f0f0; border: 1px solid; border-color: #fff #8c8c8c #8c8c8c #fff;
  display: flex; align-items: center; justify-content: center;
}
.spin-up::after, .spin-down::after { content: ""; border: 2px solid transparent; }
.spin-up::after { border-bottom: 3px solid #000; border-top: 0; }
.spin-down::after { border-top: 3px solid #000; border-bottom: 0; }
.tb-spin-dis .spin-up::after { border-bottom-color: #a8a8a8; }
.tb-spin-dis .spin-down::after { border-top-color: #a8a8a8; }
.tb-combo {
  height: 22px; background: #fff; display: flex; align-items: center; flex: none;
  border: 1px solid; border-color: #8c8c8c #fff #fff #8c8c8c; box-shadow: inset 1px 1px #b4b4b4; padding-left: 4px;
}
.tb-combo-db { width: 61px; }
.tb-combo-nd { width: 73px; }
.combo-text { flex: 1; white-space: nowrap; }
.combo-arrow {
  width: 15px; height: 18px; margin-right: 1px; background: #f0f0f0; flex: none;
  border: 1px solid; border-color: #fff #6e6e6e #6e6e6e #fff;
  display: flex; align-items: center; justify-content: center;
}
.combo-arrow::after { content: ""; border: 4px solid transparent; border-top: 5px solid #000; border-bottom: 0; }

.bo-body { flex: 1; display: flex; min-height: 0; }
.scope { position: relative; width: 850px; flex: none; padding: 8px 0 0 5px; display: flex; align-items: flex-start; }
.colorbar {
  width: 20px; height: 640px; margin-right: 10px; flex: none;
  background: linear-gradient(#ff00ff 0, #ff00ff 5%, #ff0090 10%, #ff2050 14%, #ff9020 19%, #ffff00 24%, #a0ff00 32%, #30f060 40%, #00ffff 50%, #0090ff 60%, #0000ff 73%, #000060 88%, #000010 100%);
}
.heat { width: 801px; height: 640px; display: block; background: #000; flex: none; }
.scope-overlay { position: absolute; left: 0; top: 0; width: 850px; height: 667px; overflow: visible; }
.tick-line { stroke: #000; stroke-width: 1; shape-rendering: crispEdges; fill: none; }
.dash-box { fill: none; stroke: #18a0ff; stroke-width: 1; stroke-dasharray: 2 2; shape-rendering: crispEdges; }
.dash-mark { stroke: #18a0ff; stroke-width: 1; fill: none; }
.marker { fill: #2050e0; stroke: #9ad0ff; stroke-width: .5; }
.scope-label text { font-size: 12px; fill: #ffff30; text-anchor: end; }
.scope-label-mid text { text-anchor: middle; }

.readouts {
  width: 123px; height: 479px; margin-top: 8px; flex: none; padding: 6px 0 0 0;
  border: 1px solid #a8a8a8; box-shadow: inset 1px 1px #fff, 1px 1px #fff;
}
.rd-section { margin-bottom: 10px; }
.rd-last { margin-top: 12px; }
.rd-head { height: 24px; margin: 0 0 3px 0; font-size: 16px; line-height: 24px; font-weight: bold; white-space: nowrap; text-align: center; }
.rd-indent { text-align: left; padding-left: 6px; }
.rd-gray { color: #808080; }
.rd-blue { color: #0000c8; }
.rd-row { display: flex; height: 25px; margin-bottom: 7px; font-size: 16px; font-weight: bold; align-items: center; }
.rd-row:last-child { margin-bottom: 0; }
.rd-key { width: 28px; text-align: center; padding-left: 5px; }
.rd-val {
  width: 81px; height: 25px; text-align: right; padding-right: 4px; line-height: 23px; color: #000;
  border-style: solid; border-width: 2px 1px 1px 2px; border-color: #808080 #f8f8f8 #f8f8f8 #808080;
}

.profiles { width: 385px; margin-top: 8px; flex: none; display: flex; flex-direction: column; }
.prof-svg { width: 385px; height: 484px; display: block; flex: none; }
.dot-red, .dot-green, .dot-blue, .dot-black { fill: none; stroke-width: 1; stroke-dasharray: 1 2; shape-rendering: crispEdges; }
.dot-red { stroke: #ff1464; }
.dot-green { stroke: #20e020; }
.dot-blue { stroke: #0000ff; }
.dot-black { stroke: #000; }
.curve-beam { fill: none; stroke: #000; stroke-width: 1.1; }
.curve-gauss { fill: none; stroke: #ff1464; stroke-width: 1; }
.axis-strong { fill: none; stroke: #000; stroke-width: 1; shape-rendering: crispEdges; }
.prof-tick text { font-size: 12px; fill: #333; text-anchor: end; }
.prof-tick .prof-unit { font-size: 11px; }
.prof-name { font-size: 11px; fill: #111; }
.mini-win rect, .mini-win path { fill: #f4f4f4; stroke: #8a8a8a; stroke-width: 1; }
.edge-tag rect { fill: #f0f0f0; stroke: #000; stroke-width: 1; }
.edge-tag text { font-size: 11.5px; fill: #111; text-anchor: middle; }

.width-table {
  width: 350px; height: 169px; margin: 2px 0 0 28px; padding: 5px 0 0 26px; flex: none;
  border: 1px solid #a8a8a8; box-shadow: inset 1px 1px #fff;
  display: grid; grid-template-columns: 59px 59px 41px 59px 59px; column-gap: 5px;
  grid-template-rows: 28px 12px 17px 17px 17px 17px; row-gap: 7px;
  font-size: 13px; font-weight: bold;
}
.wt-head { grid-column: span 2; text-align: center; line-height: 14px; padding-left: 4px; white-space: nowrap; }
.wt-head-v { padding: 0 24px 0 0; }
.wt-pre { white-space: pre; }
.wt-col { text-align: center; line-height: 12px; }
.wt-gauss { color: #800000; }
.wt-pct { text-align: center; line-height: 16px; white-space: nowrap; margin: 0 -6px; }
.wt-val {
  display: block; height: 17px; background: #fff; text-align: right; padding-right: 4px; line-height: 15px;
  border-style: solid; border-width: 1px 1px 1px 2px; border-color: #808080 #f0f0f0 #f0f0f0 #808080;
}
.wt-dash { text-align: center; padding: 0; line-height: 17px; font-weight: normal; font-size: 11px; }
.wt-corr { grid-column: 1 / -1; display: flex; padding-left: 32px; }
.wt-corr-val { width: 58px; color: #0000e0; flex: none; }
.wt-corr-lab { width: 115px; text-align: center; color: #0000e0; line-height: 16px; flex: none; }

.bo-status { height: 22px; flex: none; display: flex; gap: 3px; padding-left: 170px; }
.st {
  display: flex; align-items: center; justify-content: center; white-space: nowrap; font-size: 11.5px; color: #222;
  border-top: 1px solid #a0a0a0; border-left: 1px solid #a0a0a0; border-right: 1px solid #fff; flex: none;
}
.st-dim { color: #8c8c8c; }
.st-time { width: 131px; }
.st-avg { width: 77px; }
.st-zoom { width: 218px; }
.st-pow { width: 108px; }
.st-null { width: 58px; }
.st-obr { width: 57px; }
.st-prof { width: 132px; }
.st-rest { width: 385px; }

.bo-logo { position: absolute; left: 1px; bottom: 0; width: 165px; height: 41px; display: block; overflow: hidden; }
.logo-main { font-family: "Liberation Serif", serif; font-weight: bold; font-size: 10.5px; fill: #202020; }
.logo-sub { font-family: "Liberation Serif", serif; font-style: italic; font-size: 8.5px; fill: #202020; }

.watermark { position: absolute; left: 1599px; top: 984px; color: rgba(110,110,110,.42); white-space: nowrap; pointer-events: none; }
.wm-big { font-size: 20px; line-height: 24px; }
.wm-small { font-size: 14.5px; line-height: 22px; }

/* right monitor */
.right-stage { flex: 1; display: flex; align-items: center; justify-content: center; }
.cross { width: 1024px; height: 1024px; display: grid; grid-template-columns: 473px 78px 473px; grid-template-rows: 473px 78px 473px; }
.cross-w { background: #fff; }
```

FILE: script.js
```js
(function () {
  var seed = 20240517;
  function rnd() { seed = (seed * 1664525 + 1013904223) >>> 0; return seed / 4294967296; }
  function gauss() { return (rnd() + rnd() + rnd() + rnd() - 2) * 1.73; }
  function clamp(v, a, b) { return v < a ? a : v > b ? b : v; }
  function lerp(a, b, t) { t = clamp(t, 0, 1); return a + (b - a) * t; }

  /* colour map: intensity -> rgb */
  var stops = [
    [0, 0, 0, 0], [0.1, 0, 0, 70], [0.2, 0, 0, 200], [0.27, 0, 0, 255], [0.38, 0, 140, 255], [0.47, 0, 255, 255],
    [0.58, 40, 240, 110], [0.68, 160, 255, 0], [0.76, 255, 255, 0], [0.81, 255, 150, 30], [0.86, 255, 40, 70],
    [0.9, 255, 0, 130], [0.97, 255, 0, 190], [1.05, 255, 0, 230]
  ];
  function colour(v) {
    if (v > 1.12) return [255, 255, 255];
    if (v >= 1.05) return [255, 0, 230];
    for (var i = 1; i < stops.length; i++) {
      if (v <= stops[i][0]) {
        var a = stops[i - 1], b = stops[i], t = (v - a[0]) / (b[0] - a[0]);
        return [a[1] + (b[1] - a[1]) * t, a[2] + (b[2] - a[2]) * t, a[3] + (b[3] - a[3]) * t];
      }
    }
    return [255, 0, 230];
  }

  /* blobs: cx, cy, pink radius x, pink radius y, amplitude (page coordinates) */
  var blobs = [
    [315, 260, 26, 27, 0.98], [507, 264, 55, 46, 1.01], [694, 253, 35, 38, 1.03],
    [337, 453, 40, 50, 0.98], [510, 444, 55, 48, 0.885], [672, 449, 52, 58, 1.03],
    [318, 648, 24, 25, 0.98], [507, 628, 52, 41, 1.01], [697, 644, 33, 33, 1.03]
  ];
  /* faint patches: cx, cy, sx, sy, amplitude */
  var patches = [
    [795, 240, 36, 40, 0.4], [795, 644, 36, 42, 0.38], [203, 253, 36, 48, 0.22], [222, 457, 34, 30, 0.47],
    [307, 135, 22, 50, 0.33], [700, 130, 28, 60, 0.46], [760, 205, 70, 9, 0.28], [320, 700, 30, 30, 0.25], [697, 700, 34, 30, 0.3]
  ];
  var specks = [[690, 250, 15, 12, 0.2], [681, 447, 7, 26, 0.35], [505, 262, 26, 12, 0.05], [693, 655, 8, 8, 0.16]];
  var K = 8;
  var BLOB_POWER = 3.5, BLOB_SCALE = 0.582;

  function field(x, y) {
    var sum = 0, i, b, dx, dy, r, v;
    /* slow warp so the spots are not perfect ellipses */
    var wx = x + 5 * Math.sin(y / 31 + 1) + 3 * Math.sin(y / 11);
    var wy = y + 4 * Math.sin(x / 27) + 3 * Math.sin(x / 13 + 2);
    for (i = 0; i < blobs.length; i++) {
      b = blobs[i];
      dx = (wx - b[0]) / (b[2] / BLOB_SCALE);
      dy = (wy - b[1]) / (b[3] / BLOB_SCALE);
      r = Math.sqrt(dx * dx + dy * dy);
      v = b[4] * Math.exp(-Math.pow(r, BLOB_POWER));
      sum += Math.pow(v, K);
    }
    /* vertical arm */
    var w = y < 250 ? lerp(52, 90, (y - 102) / 148) : 90;
    var av = y < 240 ? lerp(0.43, 0.71, (y - 102) / 138) : 0.71;
    var u = (wx - 508) / w;
    v = av * Math.exp(-Math.pow(Math.abs(u), 3.2));
    sum += Math.pow(v, K);
    /* horizontal arm */
    var ah = x < 290 ? lerp(0.12, 0.71, (x - 120) / 170) : lerp(0.71, 0.63, (x - 720) / 110);
    var hw = x < 290 ? lerp(55, 86, (x - 160) / 130) : lerp(86, 66, (x - 720) / 110);
    u = (wy - 455) / hw;
    v = ah * Math.exp(-Math.pow(Math.abs(u), 3.2));
    sum += Math.pow(v, K);
    for (i = 0; i < patches.length; i++) {
      b = patches[i];
      dx = (x - b[0]) / b[2];
      dy = (y - b[1]) / b[3];
      v = b[4] * Math.exp(-(dx * dx + dy * dy));
      sum += Math.pow(v, K);
    }
    return Math.pow(sum, 1 / K);
  }

  function floorProb(x, y) {
    if (x < 74) return 0.6;
    if (x < 170) return (y > 340 && y < 570) ? 0.38 : 0.14;
    if (x < 270) return (y > 360 && y < 560) ? 0.3 : 0.03;
    return 0.015;
  }

  function drawHeat() {
    var cv = document.getElementById('heat');
    if (!cv || !cv.getContext) return;
    var ctx = cv.getContext('2d');
    ctx.fillStyle = '#000';
    ctx.fillRect(0, 0, cv.width, cv.height);
    /* coarse speckle, 6px cells */
    var coarse = [];
    for (var q = 0; q < 20000; q++) coarse.push(gauss());
    for (var py = 102; py < 720; py += 2) {
      var gain = 0.45 + rnd() * 0.9;
      for (var px = 47; px < 828; px += 2) {
        var I = field(px, py);
        var lowN = I < 0.34 ? gain : 1;
        var cell = coarse[(Math.floor(px / 6) + Math.floor(py / 6) * 137) % 20000];
        var n = I * lowN + gauss() * (0.018 + 0.036 * Math.sqrt(I)) + cell * 0.028 * I;
        if (n > 1.05) n = 1.05;
        if (rnd() < floorProb(px, py) * gain) n = Math.max(n, 0.2 + rnd() * 0.1);
        for (var s = 0; s < specks.length; s++) {
          var sp = specks[s], dx = (px - sp[0]) / sp[2], dy = (py - sp[1]) / sp[3];
          if (dx * dx + dy * dy < 1 && rnd() < sp[4]) n = 1.2;
        }
        if (n < 0.11) continue;
        var c = colour(n);
        ctx.fillStyle = 'rgb(' + Math.round(c[0]) + ',' + Math.round(c[1]) + ',' + Math.round(c[2]) + ')';
        ctx.fillRect(px - 37, py - 83, 2, 2);
      }
    }
  }

  /* profile curves, control points read in zoomed reference units */
  var hBeam = [[511,600],[511,640],[518,665],[530,630],[537,675],[555,675],[565,695],[590,703],[610,698],[625,680],[650,688],[665,655],[680,650],[695,625],[720,630],[745,640],[770,635],[780,570],[790,490],[800,435],[810,350],[825,275],[850,262],[870,295],[890,350],[905,420],[930,485],[950,480],[970,430],[985,350],[1010,210],[1030,130],[1060,85],[1080,63],[1110,60],[1135,85],[1165,150],[1190,240],[1210,360],[1235,460],[1255,445],[1275,380],[1300,290],[1320,220],[1340,165],[1355,162],[1375,190],[1390,280],[1405,400],[1420,490],[1435,550],[1450,530],[1470,500],[1495,490],[1500,520],[1502,705]];
  var vBeam = [[516,435],[518,320],[530,250],[540,170],[555,100],[570,40],[590,5],[610,8],[635,40],[655,100],[680,200],[705,270],[735,285],[760,250],[780,170],[800,60],[815,-30],[840,-100],[865,-155],[890,-185],[925,-210],[950,-175],[985,-145],[1010,-100],[1025,-50],[1040,10],[1060,90],[1080,200],[1100,260],[1130,300],[1150,270],[1170,190],[1190,80],[1210,10],[1235,-25],[1250,-28],[1280,-15],[1300,40],[1310,120],[1330,220],[1345,330],[1370,365],[1420,395],[1460,415],[1490,420],[1510,435]];

  function hx(p) { return 840 + p / 2.958; }
  function hy(p) { return 70 + p / 3; }
  function vy(p) { return 400 + p / 3; }

  function jag(points, fy, amp) {
    var out = [];
    for (var i = 1; i < points.length; i++) {
      var a = points[i - 1], b = points[i];
      var x0 = hx(a[0]), y0 = fy(a[1]), x1 = hx(b[0]), y1 = fy(b[1]);
      var steps = Math.max(1, Math.round(Math.abs(x1 - x0) / 0.8));
      for (var k = 0; k < steps; k++) {
        var t = k / steps;
        out.push((x0 + (x1 - x0) * t).toFixed(1) + ',' + (y0 + (y1 - y0) * t + gauss() * amp).toFixed(1));
      }
    }
    return out.join(' ');
  }
  function gaussCurve(cx, top, base, sig, x0, x1, fy) {
    var out = [];
    for (var p = x0; p <= x1; p += 6) {
      var d = (p - cx) / sig;
      var y = base - (base - top) * Math.exp(-d * d / 2);
      out.push(hx(p).toFixed(1) + ',' + fy(y).toFixed(1));
    }
    return out.join(' ');
  }
  function addLine(parent, cls, pts) {
    var el = document.createElementNS('http://www.w3.org/2000/svg', 'polyline');
    el.setAttribute('class', cls);
    el.setAttribute('points', pts);
    parent.appendChild(el);
  }
  function drawCurves() {
    var g = document.getElementById('curves');
    if (!g) return;
    addLine(g, 'curve-gauss', gaussCurve(1110, 58, 712, 205, 565, 1520, hy));
    addLine(g, 'curve-beam', jag(hBeam, hy, 0.9));
    addLine(g, 'curve-gauss', gaussCurve(930, -212, 442, 204, 485, 1520, vy));
    addLine(g, 'curve-beam', jag(vBeam, vy, 0.9));
  }

  drawHeat();
  drawCurves();
})();
```
